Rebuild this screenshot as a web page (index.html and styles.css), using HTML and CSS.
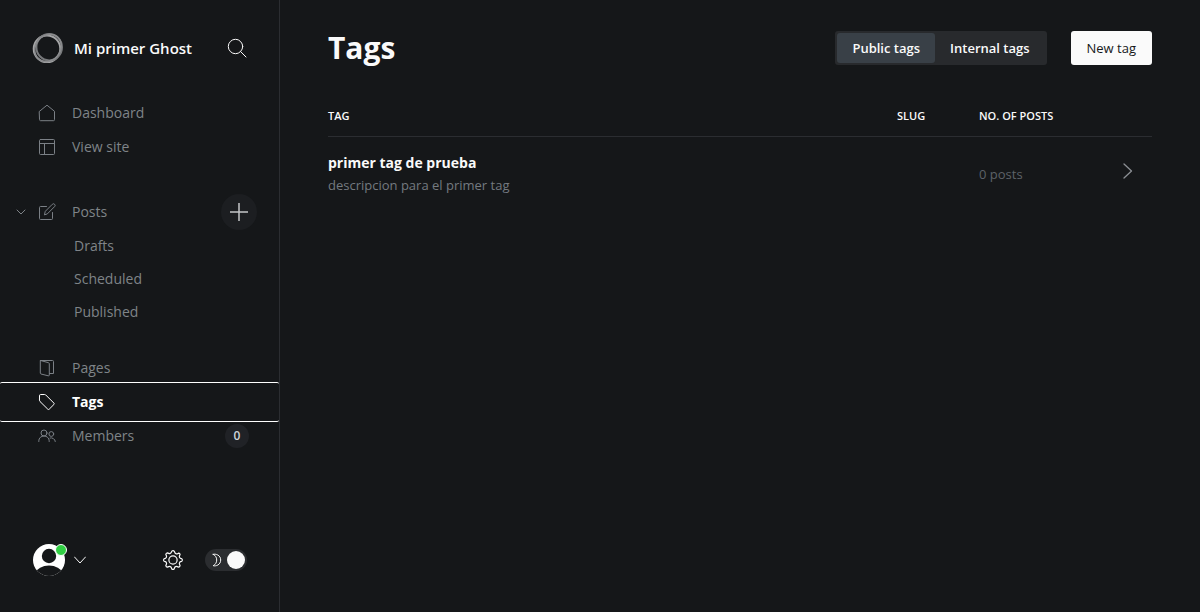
FILE: index.html
```html
<!DOCTYPE html>
<html lang="en">
<head>
<meta charset="utf-8">
<meta name="viewport" content="width=device-width, initial-scale=1">
<title>Tags - Mi primer Ghost</title>
<link rel="stylesheet" href="styles.css">
</head>
<body>
<div class="app">
  <aside class="sidebar">
    <header class="site">
      <svg class="site-logo" viewBox="0 0 32 32" aria-hidden="true">
        <circle cx="15" cy="16.800" r="13.300" stroke="#a5a6a7" stroke-width="2"/>
        <ellipse cx="17.200" cy="15.200" rx="12.800" ry="13.200" stroke="#77797b" stroke-width="2"/>
        <ellipse cx="16" cy="16" rx="14.500" ry="12.300" transform="rotate(-50 16 16)" stroke="#8b8c8e" stroke-width="1.500"/>
      </svg>
      <span class="site-name">Mi primer Ghost</span>
      <button class="icon-button search" type="button" aria-label="Search">
        <svg viewBox="0 0 20 20" aria-hidden="true"><circle cx="8.500" cy="8.500" r="7.200"/><path d="M13.700 13.700 19 19"/></svg>
      </button>
    </header>

    <nav class="nav" aria-label="Main">
      <ul class="nav-group">
        <li class="nav-item"><a class="nav-link" href="#dashboard">
          <svg class="nav-icon" viewBox="0 0 18 18" aria-hidden="true"><path d="M1.500 7.300 9 1.200l7.500 6.100v8.400a1 1 0 0 1-1 1h-13a1 1 0 0 1-1-1z"/></svg>
          Dashboard</a></li>
        <li class="nav-item"><a class="nav-link" href="#site">
          <svg class="nav-icon" viewBox="0 0 18 18" aria-hidden="true"><rect x="1.500" y="1.500" width="15" height="15" rx="1"/><path d="M1.500 5.500h15M6.500 5.500v11"/></svg>
          View site</a></li>
      </ul>
      <ul class="nav-group">
        <li class="nav-item">
          <button class="collapse" type="button" aria-label="Collapse posts" aria-expanded="true">
            <svg viewBox="0 0 10 6" aria-hidden="true"><path d="m1 1 4 4 4-4"/></svg>
          </button>
          <a class="nav-link" href="#posts">
          <svg class="nav-icon" viewBox="0 0 18 18" aria-hidden="true"><path d="M8.500 3.500h-6a1 1 0 0 0-1 1v11a1 1 0 0 0 1 1h11a1 1 0 0 0 1-1V9.500M6.500 11.500l.8-3.200 7-7a1.600 1.600 0 0 1 2.300 2.300l-7 7z"/></svg>
          Posts</a>
          <button class="add" type="button" aria-label="New post">
            <svg viewBox="0 0 18 18" aria-hidden="true"><path d="M9 0v18M0 9h18"/></svg>
          </button>
        </li>
        <li class="nav-sub"><a class="nav-link" href="#drafts">Drafts</a></li>
        <li class="nav-sub"><a class="nav-link" href="#scheduled">Scheduled</a></li>
        <li class="nav-sub"><a class="nav-link" href="#published">Published</a></li>
      </ul>
      <ul class="nav-group">
        <li class="nav-item"><a class="nav-link" href="#pages">
          <svg class="nav-icon" viewBox="0 0 18 18" aria-hidden="true"><path d="M2.500 1.500h12a1 1 0 0 1 1 1v12h-4M2.500 1.500l8 2.200a1 1 0 0 1 .8 1V16a.8.800 0 0 1-1 .8L3 15a1 1 0 0 1-.7-1V2z"/></svg>
          Pages</a></li>
        <li class="nav-item nav-item-active"><a class="nav-link" href="#tags" aria-current="page">
          <svg class="nav-icon" viewBox="0 0 18 18" aria-hidden="true"><path d="M1.500 2.500a1 1 0 0 1 1-1h4.200a1.500 1.500 0 0 1 1 .4l8.200 8.200a1 1 0 0 1 0 1.400l-4.700 4.700a1 1 0 0 1-1.400 0L2 8.500a1.500 1.500 0 0 1-.5-1z"/></svg>
          Tags</a></li>
        <li class="nav-item"><a class="nav-link" href="#members">
          <svg class="nav-icon" viewBox="0 0 18 18" aria-hidden="true"><circle cx="6" cy="6" r="3"/><path d="M.8 14.500v-.7a5.200 4.800 0 0 1 10.400 0v.7"/><circle cx="13.300" cy="7" r="2.400"/><path d="M12 11a4 4 0 0 1 5.300 3.500"/></svg>
          Members</a>
          <span class="count">0</span></li>
      </ul>
    </nav>

    <footer class="sidebar-footer">
      <button class="user" type="button" aria-label="Account menu">
        <span class="avatar">
          <svg class="avatar-image" viewBox="0 0 32 32" aria-hidden="true">
            <defs><clipPath id="face"><circle cx="16" cy="16" r="16"/></clipPath></defs>
            <g clip-path="url(#face)"><rect width="32" height="32" fill="#fff"/><circle cx="16" cy="12" r="7.200" fill="#151719"/><path d="M2 29a14.500 10 0 0 1 28 0v3H2z" fill="#151719"/></g>
          </svg>
          <span class="status"></span>
        </span>
        <svg class="user-caret" viewBox="0 0 12 8" aria-hidden="true"><path d="m.5 1 5.500 6 5.500-6"/></svg>
      </button>
      <button class="icon-button settings" type="button" aria-label="Settings">
        <svg viewBox="0 0 24 24" aria-hidden="true"><circle cx="12" cy="12" r="4.500"/><path d="m13.500 2.600.5 1.300a2.200 2.200 0 0 0 3 1.200l1.300-.6a2 2 0 0 1 1.400 1.400l-.6 1.400a2.200 2.200 0 0 0 1.200 2.900l1.400.5a2 2 0 0 1 0 2.600l-1.400.5a2.200 2.200 0 0 0-1.200 2.900l.6 1.400a2 2 0 0 1-1.700 1.700l-1.400-.6a2.200 2.200 0 0 0-2.900 1.200l-.5 1.400a2 2 0 0 1-2.500 0l-.5-1.400a2.200 2.200 0 0 0-2.900-1.200l-1.400.6a2 2 0 0 1-1.700-1.700l.6-1.400A2.200 2.200 0 0 0 3.600 13.800l-1.400-.5a2 2 0 0 1 0-2.600l1.400-.5a2.200 2.200 0 0 0 1.200-2.900l-.6-1.400a2 2 0 0 1 1.700-1.700l1.400.6a2.200 2.200 0 0 0 2.900-1.200l.5-1.300a2 2 0 0 1 2.800.3z"/></svg>
      </button>
      <label class="theme">
        <input class="theme-input" type="checkbox" checked aria-label="Dark mode">
        <svg class="theme-moon" viewBox="0 0 10 14" aria-hidden="true"><path d="M1.200 1.300c2.500-.8 7.500.8 7.500 5.700s-5 6.500-7.500 5.700C3.500 11.500 4.700 9.500 4.700 7S3.500 2.500 1.200 1.300z"/></svg>
        <span class="theme-knob"></span>
      </label>
    </footer>
  </aside>

  <main class="main">
    <header class="page-header">
      <h1 class="page-title">Tags</h1>
      <div class="actions">
        <div class="segmented" role="group" aria-label="Tag type">
          <button class="segment segment-active" type="button" aria-pressed="true">Public tags</button>
          <button class="segment" type="button" aria-pressed="false">Internal tags</button>
        </div>
        <a class="new-tag" href="#new">New tag</a>
      </div>
    </header>

    <table class="tags">
      <thead>
        <tr><th class="col-tag" scope="col">Tag</th><th class="col-slug" scope="col">Slug</th><th class="col-posts" scope="col">No. of posts</th><td class="col-open"></td></tr>
      </thead>
      <tbody>
        <tr>
          <td><a class="tag-link" href="#primer"><span class="tag-name">primer tag de prueba</span><span class="tag-description">descripcion para el primer tag</span></a></td>
          <td></td>
          <td class="posts">0 posts</td>
          <td class="open"><a class="open-link" href="#primer" aria-label="Edit tag"><svg viewBox="0 0 10 16" aria-hidden="true"><path d="m1 1 7.500 7L1 15"/></svg></a></td>
        </tr>
      </tbody>
    </table>
  </main>
</div>
</body>
</html>
```

FILE: styles.css
```css
* {
  box-sizing: border-box;
}

body {
  margin: 0;
  background: #151719;
  color: #fafafa;
  font: 14px/20px "Segoe UI", "Open Sans", "Noto Sans", sans-serif;
}

a {
  color: inherit;
  text-decoration: none;
}

button {
  padding: 0;
  border: 0;
  background: none;
  color: inherit;
  font: inherit;
  cursor: pointer;
}

ul {
  margin: 0;
  padding: 0;
  list-style: none;
}

svg {
  display: block;
  fill: none;
  stroke: currentColor;
  stroke-linecap: round;
  stroke-linejoin: round;
}

.app {
  display: flex;
  min-height: 100vh;
}

/* Sidebar */
.sidebar {
  display: flex;
  flex: 0 0 280px;
  flex-direction: column;
  border-right: 1px solid #2b2d31;
}

.site {
  display: flex;
  align-items: center;
  padding: 32px;
}

.site-logo {
  width: 32px;
  height: 32px;
}

.site-name {
  flex: 1;
  padding-left: 10px;
  font-size: 15px;
  font-weight: 600;
  white-space: nowrap;
}

.icon-button svg {
  width: 20px;
  height: 20px;
}

.nav {
  display: flex;
  flex: 1;
  flex-direction: column;
  gap: 31px;
}

.nav-item {
  position: relative;
  display: flex;
  align-items: center;
  height: 34px;
  padding: 0 30px 0 38px;
  color: #7f8488;
}

.nav-link {
  display: flex;
  flex: 1;
  align-items: center;
  gap: 16px;
  color: #7f8488;
}

.nav-icon {
  width: 18px;
  height: 18px;
  color: #7b8086;
}

.nav-sub {
  display: flex;
  height: 33px;
  padding-left: 74px;
}

.nav-group:nth-child(3) {
  margin-top: -8px;
}

.nav-item-active {
  height: 40px;
  margin: -3px 0;
  border: solid #fff;
  border-width: 1px 0;
  border-radius: 2px;
}

.nav-item-active .nav-link {
  color: #fff;
  font-weight: 700;
}

.nav-item-active .nav-icon {
  color: #fff;
}

.collapse {
  position: absolute;
  left: 16px;
}

.collapse svg {
  width: 10px;
  height: 6px;
}

.add {
  display: grid;
  place-items: center;
  width: 36px;
  height: 36px;
  margin-right: -8px;
  border-radius: 50%;
  background: #1c1e21;
  color: #c4c6c8;
}

.add svg {
  width: 18px;
  height: 18px;
  stroke-width: 1.5;
}

.count {
  width: 24px;
  height: 24px;
  border-radius: 50%;
  background: #202226;
  color: #ced4d9;
  font-size: 12px;
  font-weight: 600;
  line-height: 24px;
  text-align: center;
}

.sidebar-footer {
  display: flex;
  align-items: center;
  padding: 32px 32px 36px 33px;
}

.user {
  display: flex;
  flex: 1;
  align-items: center;
  gap: 9px;
}

.avatar {
  position: relative;
}

.avatar-image {
  width: 32px;
  height: 32px;
  stroke: none;
}

.status {
  position: absolute;
  top: 0;
  right: -2px;
  width: 12px;
  height: 12px;
  border: 1px solid #fff;
  border-radius: 50%;
  background: #30cf43;
}

.user-caret {
  width: 12px;
  height: 8px;
}

.settings svg {
  width: 22px;
  height: 22px;
  stroke-width: 1.3;
}

.theme {
  position: relative;
  display: flex;
  align-items: center;
  justify-content: space-between;
  width: 42px;
  height: 22px;
  margin-left: 21px;
  padding: 0 2px 0 7px;
  border-radius: 11px;
  background: #2b2d30;
}

.theme-input {
  position: absolute;
  inset: 0;
  margin: 0;
  opacity: 0;
}

.theme-moon {
  width: 10px;
  height: 14px;
}

.theme-knob {
  width: 18px;
  height: 18px;
  border-radius: 50%;
  background: #fafafa;
}

/* Content */
.main {
  flex: 1;
  min-width: 0;
  padding: 24px 48px;
}

.page-header {
  display: flex;
  align-items: center;
  justify-content: space-between;
  height: 48px;
}

.page-title {
  margin: 0;
  font-size: 30px;
  font-weight: 700;
  line-height: 40px;
}

.actions {
  display: flex;
  gap: 24px;
}

.segmented {
  display: flex;
  padding: 2px;
  border-radius: 3px;
  background: #282a2d;
}

.segment {
  padding: 0 15px;
  border-radius: 3px;
  font-size: 13px;
  font-weight: 600;
  line-height: 30px;
}

.segment-active {
  background: #394047;
}

.new-tag {
  padding: 0 16px;
  border-radius: 3px;
  background: #fafafa;
  color: #151719;
  font-size: 13px;
  line-height: 34px;
}

.tags {
  width: 100%;
  margin-top: 24px;
  border-collapse: collapse;
  table-layout: fixed;
}

.tags th,
.tags td {
  padding: 0;
  text-align: left;
}

.tags th {
  height: 40px;
  font-size: 11px;
  font-weight: 600;
  line-height: 40px;
  text-transform: uppercase;
  white-space: nowrap;
}

.tags thead {
  border-bottom: 1px solid #2b2d31;
}

.col-slug {
  width: 82px;
}

.col-posts {
  width: 144px;
}

.col-open {
  width: 29px;
}

.tag-link {
  display: block;
  padding: 14px 0 16px;
}

.tag-name,
.tag-description {
  display: block;
}

.tag-name {
  font-weight: 700;
  line-height: 24px;
}

.tag-description {
  color: #747a80;
  font-size: 13px;
}

.tags .posts {
  color: #5d6268;
  font-size: 13px;
}

.open-link {
  display: block;
  padding-bottom: 6px;
  color: #8b8f94;
}

.open-link svg {
  width: 10px;
  height: 16px;
  stroke-width: 1.3;
}
```
